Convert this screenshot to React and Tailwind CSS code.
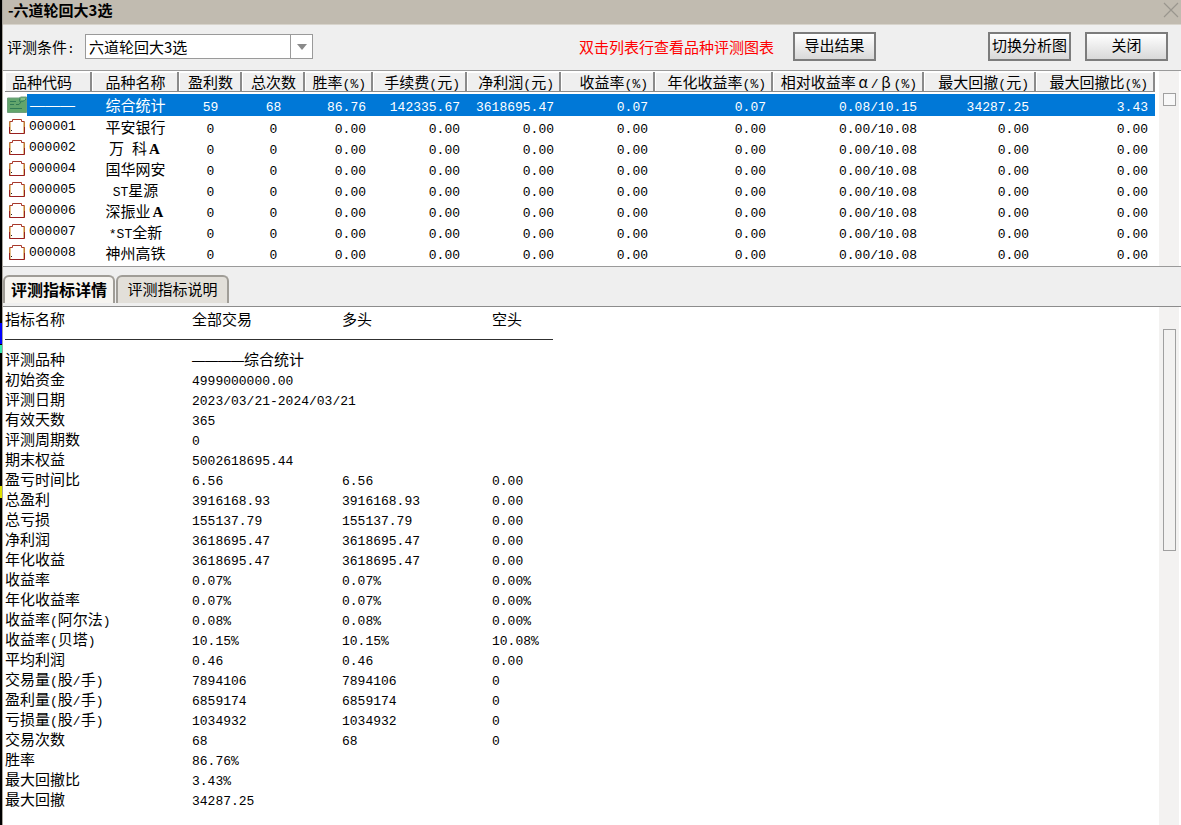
import React from "react";

const LATIN = /([\x20-\x7e]+)/;

function Mixed({ text }) {
  return text.split(LATIN).map((part, i) =>
    i % 2 ? (
      <span key={i} className="font-['Liberation_Mono',monospace] text-[13px] leading-none">{part}</span>
    ) : (
      <React.Fragment key={i}>{part}</React.Fragment>
    )
  );
}

const WideA = () => (
  <span className="inline-block w-[15px] text-center font-['Liberation_Serif',serif] leading-none font-bold">A</span>
);

const COLUMNS = [
  { title: "品种代码", col: "w-[87px]", align: "pl-[7px] text-left" },
  { title: "品种名称", col: "w-[87px]", align: "text-center" },
  { title: "盈利数", col: "w-[63px]", align: "text-center" },
  { title: "总次数", col: "w-[63px]", align: "text-center" },
  { title: "胜率(%)", col: "w-[68px]", align: "pr-[7px] text-right" },
  { title: "手续费(元)", col: "w-[94px]", align: "pr-[7px] text-right" },
  { title: "净利润(元)", col: "w-[94px]", align: "pr-[7px] text-right" },
  { title: "收益率(%)", col: "w-[94px]", align: "pr-[7px] text-right" },
  { title: "年化收益率(%)", col: "w-[118px]", align: "pr-[7px] text-right" },
  { title: "相对收益率α/β(%)", col: "w-[151px]", align: "pr-[7px] text-right" },
  { title: "最大回撤(元)", col: "w-[112px]", align: "pr-[7px] text-right" },
  { title: "最大回撤比(%)", col: "w-[119px]", align: "pr-[7px] text-right" },
];

const SUMMARY = ["59", "68", "86.76", "142335.67", "3618695.47", "0.07", "0.07", "0.08/10.15", "34287.25", "3.43"];
const EMPTY = ["0", "0", "0.00", "0.00", "0.00", "0.00", "0.00", "0.00/10.08", "0.00", "0.00"];

const STOCKS = [
  { code: "000001", name: "平安银行" },
  { code: "000002", name: "万 科", wideA: true },
  { code: "000004", name: "国华网安" },
  { code: "000005", name: "ST星源" },
  { code: "000006", name: "深振业", wideA: true },
  { code: "000007", name: "*ST全新" },
  { code: "000008", name: "神州高铁" },
];

const DETAILS = [
  ["评测品种", "————综合统计"],
  ["初始资金", "4999000000.00"],
  ["评测日期", "2023/03/21-2024/03/21"],
  ["有效天数", "365"],
  ["评测周期数", "0"],
  ["期末权益", "5002618695.44"],
  ["盈亏时间比", "6.56", "6.56", "0.00"],
  ["总盈利", "3916168.93", "3916168.93", "0.00"],
  ["总亏损", "155137.79", "155137.79", "0.00"],
  ["净利润", "3618695.47", "3618695.47", "0.00"],
  ["年化收益", "3618695.47", "3618695.47", "0.00"],
  ["收益率", "0.07%", "0.07%", "0.00%"],
  ["年化收益率", "0.07%", "0.07%", "0.00%"],
  ["收益率(阿尔法)", "0.08%", "0.08%", "0.00%"],
  ["收益率(贝塔)", "10.15%", "10.15%", "10.08%"],
  ["平均利润", "0.46", "0.46", "0.00"],
  ["交易量(股/手)", "7894106", "7894106", "0"],
  ["盈利量(股/手)", "6859174", "6859174", "0"],
  ["亏损量(股/手)", "1034932", "1034932", "0"],
  ["交易次数", "68", "68", "0"],
  ["胜率", "86.76%"],
  ["最大回撤比", "3.43%"],
  ["最大回撤", "34287.25"],
];

function DetailValue({ text }) {
  if (!text.startsWith("—")) return <Mixed text={text} />;
  return (
    <>
      <span className="font-['Liberation_Sans',sans-serif] text-[13px] leading-none">————</span>
      {text.slice(4)}
    </>
  );
}

function SummaryIcon() {
  return (
    <svg className="shrink-0" width="20" height="18" viewBox="0 0 20 18" aria-hidden="true">
      <path d="M0.500 2H12L14 1H19.500V16.500H0.500Z" fill="#62a56c" stroke="#6f9f7c" />
      <path d="M3 5.500H9M3 8.500H7M3 12.500H15M9 8.500H12L14 6" stroke="#2f7a55" fill="none" />
      <path d="M12.500 2.500V5.500H16M16 5.500L19 3" stroke="#3b8560" fill="none" />
      <path d="M14 2H18V4H14Z" fill="#86c08a" />
    </svg>
  );
}

function StockIcon() {
  return (
    <svg className="shrink-0" width="16" height="17" viewBox="0 0 16 17" aria-hidden="true">
      <path d="M0.500 3.500H3.500V1.500H12.500V3.500H15.500" fill="none" stroke="#a8382a" />
      <path d="M1 4V15.500M15 4V15.500" stroke="#e3c08a" strokeWidth="2" />
      <path d="M0.500 3.500V10M15.500 3.500V10" stroke="#c07a35" />
      <path d="M0.500 9V15.500H15.500V9" fill="none" stroke="#981f1f" />
      <rect x="2" y="12" width="1" height="1" fill="#222" />
    </svg>
  );
}

function PushButton({ children }) {
  return (
    <button
      type="button"
      className="h-[29px] w-[83px] border-2 border-[#7c7c7c] bg-linear-to-b from-white to-[#d9d9d9] pb-1 text-center leading-5 whitespace-nowrap"
    >
      {children}
    </button>
  );
}

function HeaderTitle({ title }) {
  if (!title.includes("α")) return <Mixed text={title} />;
  return (
    <>
      相对收益率
      <span className="inline-block w-[15px] text-center leading-none">α</span>
      <Mixed text="/" />
      <span className="inline-block w-[15px] text-center leading-none">β</span>
      <Mixed text="(%)" />
    </>
  );
}

function StockList() {
  return (
    <section className="flex h-[197px] border-y border-[#9a9a9a] bg-white">
      <div className="min-w-0 flex-1 pt-px pr-1 pl-0.5">
        <table className="w-full table-fixed border-separate border-spacing-0 whitespace-nowrap">
          <colgroup>
            {COLUMNS.map((c) => (
              <col key={c.title} className={c.col} />
            ))}
          </colgroup>
          <thead>
            <tr>
              {COLUMNS.map((c) => (
                <th
                  key={c.title}
                  scope="col"
                  className={`${c.align} h-5 border-b border-[#8a8a8a] bg-[#efefef] py-0 leading-[19px] font-normal shadow-[inset_-2px_0_0_#8a8a8a,inset_1px_1px_0_#ffffff]`}
                >
                  <HeaderTitle title={c.title} />
                </th>
              ))}
            </tr>
            <tr className="h-0.5" aria-hidden="true" />
          </thead>
          <tbody>
            <tr className="bg-[#0078d7] text-white">
              <td className="h-[22px] p-0">
                <div className="flex items-center gap-[3px] leading-5">
                  <span className="flex h-[22px] w-[22px] items-center bg-white pl-0.5">
                    <SummaryIcon />
                  </span>
                  <span className="font-['Liberation_Sans',sans-serif]">———</span>
                </div>
              </td>
              <td className="p-0 text-center leading-5">综合统计</td>
              {SUMMARY.map((v, i) => (
                <td key={i} className={`${COLUMNS[i + 2].align} py-0 leading-5`}>
                  <Mixed text={v} />
                </td>
              ))}
            </tr>
            {STOCKS.map((s) => (
              <tr key={s.code}>
                <td className="h-[21px] p-0">
                  <div className="flex items-center gap-1 pl-1 leading-5">
                    <StockIcon />
                    <Mixed text={s.code} />
                  </div>
                </td>
                <td className="p-0 text-center leading-5">
                  <Mixed text={s.name} />
                  {s.wideA && <WideA />}
                </td>
                {EMPTY.map((v, i) => (
                  <td key={i} className={`${COLUMNS[i + 2].align} py-0 leading-5`}>
                    <Mixed text={v} />
                  </td>
                ))}
              </tr>
            ))}
          </tbody>
        </table>
      </div>
      <div className="w-[22px] border-r-2 border-white bg-[#f3f2f1] px-1 pt-[22px]">
        <div className="h-[13px] w-[13px] border border-[#a0a0a0] bg-[#f8f8f8]" />
      </div>
    </section>
  );
}

function DetailPanel() {
  return (
    <section className="flex flex-1 border-t border-[#8c8c8c] bg-white">
      <div className="min-w-0 flex-1 pt-[2px] pl-[2px]">
        <table className="w-[548px] table-fixed border-collapse whitespace-nowrap">
          <colgroup>
            <col className="w-[187px]" />
            <col className="w-[150px]" />
            <col className="w-[150px]" />
            <col />
          </colgroup>
          <thead>
            <tr className="h-[30px] border-b border-[#303030] text-left align-top">
              {["指标名称", "全部交易", "多头", "空头"].map((t) => (
                <th key={t} scope="col" className="p-0 leading-5 font-normal">{t}</th>
              ))}
            </tr>
          </thead>
          <tbody>
            <tr className="h-2.5" aria-hidden="true" />
            {DETAILS.map(([label, ...values]) => (
              <tr key={label} className="h-5">
                <th scope="row" className="p-0 text-left leading-5 font-normal">
                  <Mixed text={label} />
                </th>
                {[0, 1, 2].map((i) => (
                  <td key={i} className="p-0 leading-5">
                    <DetailValue text={values[i] || ""} />
                  </td>
                ))}
              </tr>
            ))}
          </tbody>
        </table>
      </div>
      <div className="w-[22px] border-r-2 border-white bg-[#f3f2f1] px-1 pt-[22px]">
        <div className="h-[222px] w-[13px] border border-[#a0a0a0] bg-[#f3f2f1]" />
      </div>
    </section>
  );
}

export default function App() {
  return (
    <div className="flex min-h-screen w-full bg-[#efefef] font-['Noto_Sans_CJK_SC',sans-serif] text-[15px] leading-5 text-black">
      <div className="w-0.5 shrink-0 bg-black pt-[323px]">
        <div className="h-[21px] bg-[#0000ff]" />
        <div className="mt-px h-2 bg-[#35e8b0]" />
        <div className="mt-[133px] h-3 bg-[#e0e000]" />
      </div>
      <main className="flex min-w-0 flex-1 flex-col border-l border-[#a8a49c]">
        <header className="flex h-[25px] items-start justify-between border-b border-[#d8d4cc] bg-[#c1bbb0] pl-[5px]">
          <h1 className="font-bold">-六道轮回大3选</h1>
          <button type="button" aria-label="关闭窗口" className="flex h-5 w-[18px] items-center">
            <svg width="16" height="16" viewBox="0 0 16 16" aria-hidden="true">
              <path d="M1 1L15 15M15 1L1 15" stroke="#9a968e" strokeWidth="1.200" />
            </svg>
          </button>
        </header>

        <div className="flex h-[45px] items-center pr-[13px] pb-0.5 pl-1">
          <label htmlFor="condition" className="w-[78px]">
            <Mixed text="评测条件:" />
          </label>
          <div className="relative">
            <select
              id="condition"
              defaultValue="a"
              className="block h-[25px] w-[228px] appearance-none border border-[#9a9a9a] bg-white pl-[3px]"
            >
              <option value="a">六道轮回大3选</option>
            </select>
            <span className="pointer-events-none absolute inset-y-px right-px flex w-[22px] items-center justify-center border-l border-[#9a9a9a]">
              <svg width="10" height="6" viewBox="0 0 10 6" aria-hidden="true">
                <path d="M0 0H10L5 6Z" fill="#8a8a8a" />
              </svg>
            </span>
          </div>
          <p className="mr-[19px] ml-auto text-[#ff0000]">双击列表行查看品种评测图表</p>
          <PushButton>导出结果</PushButton>
          <div className="w-28" />
          <PushButton>切换分析图</PushButton>
          <div className="w-3.5" />
          <PushButton>关闭</PushButton>
        </div>

        <StockList />

        <nav role="tablist" className="flex h-[39px] items-start gap-px pt-2">
          <button
            type="button"
            role="tab"
            aria-selected="true"
            className="h-7 w-[112px] rounded-t-md border-2 border-b-0 border-[#a09d97] bg-[#f6f4f0] pb-0.5 text-base leading-6 font-bold whitespace-nowrap"
          >
            评测指标详情
          </button>
          <button
            type="button"
            role="tab"
            aria-selected="false"
            className="h-7 w-[113px] rounded-t-md border-2 border-b-0 border-[#a09d97] bg-[#e2dfd9] pb-0.5 leading-6 whitespace-nowrap"
          >
            评测指标说明
          </button>
        </nav>

        <DetailPanel />
      </main>
    </div>
  );
}
